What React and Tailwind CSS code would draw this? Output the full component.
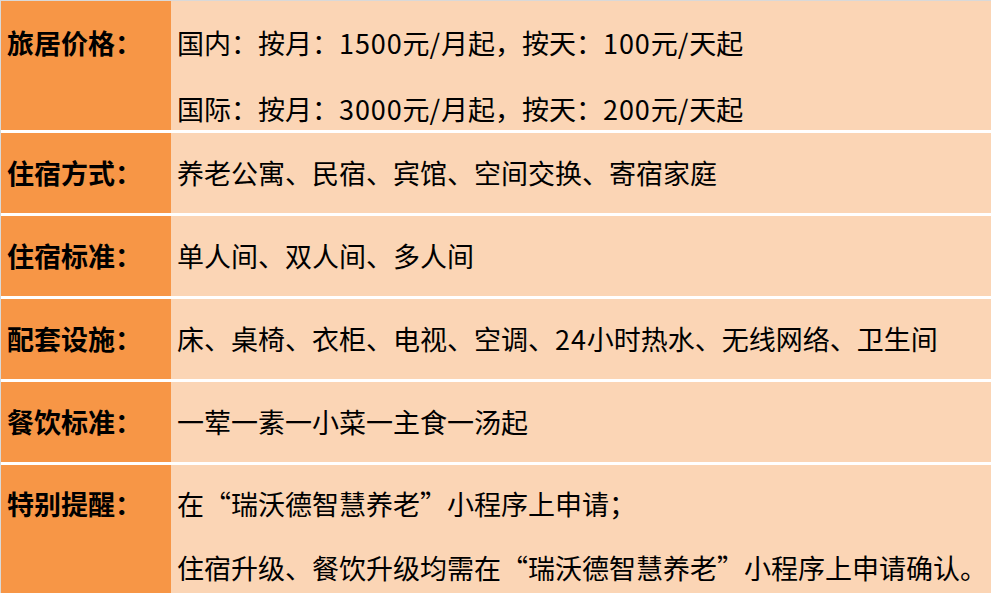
const rows = [
  {
    label: '旅居价格：',
    lines: ['国内：按月：1500元/月起，按天：100元/天起', '国际：按月：3000元/月起，按天：200元/天起'],
    height: 'h-[129px]',
    pad: 'pt-[24px]',
    gap: 'gap-[30px]',
  },
  { label: '住宿方式：', lines: ['养老公寓、民宿、宾馆、空间交换、寄宿家庭'] },
  { label: '住宿标准：', lines: ['单人间、双人间、多人间'] },
  { label: '配套设施：', lines: ['床、桌椅、衣柜、电视、空调、24小时热水、无线网络、卫生间'] },
  { label: '餐饮标准：', lines: ['一荤一素一小菜一主食一汤起'] },
  {
    label: '特别提醒：',
    lines: ['在“瑞沃德智慧养老”小程序上申请；', '住宿升级、餐饮升级均需在“瑞沃德智慧养老”小程序上申请确认。'],
    height: 'h-[129px]',
    pad: 'pt-[21px]',
    gap: 'gap-[28px]',
  },
];

// digits and slashes run a touch wider in the original font
function Text({ children }) {
  const parts = children.split(/([0-9/]+)/);
  return parts.map((p, i) =>
    /^[0-9/]+$/.test(p) ? (
      <span key={i} className="tracking-[0.9px]">{p}</span>
    ) : (
      <span key={i}>{p}</span>
    )
  );
}

function Row({ row }) {
  const multi = row.lines.length > 1;

  if (!multi) {
    return (
      <div className="flex h-[80px]">
        <div className="w-[170px] shrink-0 bg-[#f79646] pl-[6px] flex items-center">
          <span className="font-bold leading-[36px]">{row.label}</span>
        </div>
        <div className="flex-1 bg-[#fbd5b5] pl-[6px] flex items-center">
          <span className="leading-[36px] whitespace-nowrap"><Text>{row.lines[0]}</Text></span>
        </div>
      </div>
    );
  }

  return (
    <div className={`flex ${row.height}`}>
      <div className={`w-[170px] shrink-0 bg-[#f79646] pl-[6px] ${row.pad}`}>
        <div className="font-bold leading-[36px]">{row.label}</div>
      </div>
      <div className={`flex-1 bg-[#fbd5b5] pl-[6px] flex flex-col ${row.pad} ${row.gap}`}>
        {row.lines.map((line) => (
          <div key={line} className="leading-[36px] whitespace-nowrap"><Text>{line}</Text></div>
        ))}
      </div>
    </div>
  );
}

export default function App() {
  return (
    <div
      className="w-[991px] h-[593px] overflow-hidden bg-white border-t border-l border-[#d9d9d9] text-black text-[27px]"
      style={{ fontFamily: '"Noto Sans CJK SC", "Noto Sans", sans-serif' }}
    >
      <div className="flex flex-col gap-[3px]">
        {rows.map((row) => (
          <Row key={row.label} row={row} />
        ))}
      </div>
    </div>
  );
}
